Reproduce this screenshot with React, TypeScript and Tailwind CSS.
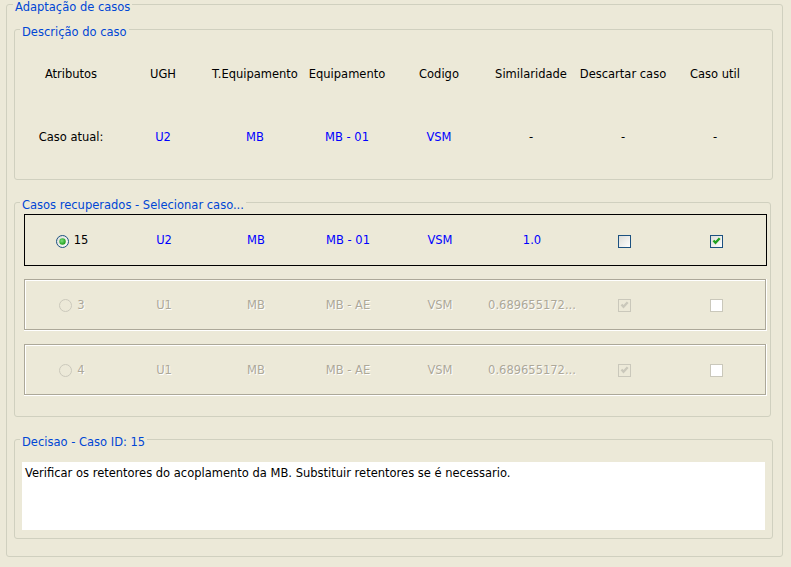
import React from "react";

type Caso = {
  id: string;
  ugh: string;
  tipo: string;
  equipamento: string;
  codigo: string;
  similaridade: string;
  descartar: boolean;
  util: boolean;
  ativo: boolean;
};

const casos: Caso[] = [
  { id: "15", ugh: "U2", tipo: "MB", equipamento: "MB - 01", codigo: "VSM", similaridade: "1.0", descartar: false, util: true, ativo: true },
  { id: "3", ugh: "U1", tipo: "MB", equipamento: "MB - AE", codigo: "VSM", similaridade: "0.689655172...", descartar: true, util: false, ativo: false },
  { id: "4", ugh: "U1", tipo: "MB", equipamento: "MB - AE", codigo: "VSM", similaridade: "0.689655172...", descartar: true, util: false, ativo: false },
];

const Legend = ({ children }: { children: React.ReactNode }) => (
  <legend className="ml-[-1px] px-[2px] pt-[6px] leading-[2px] text-[#0046D5]">{children}</legend>
);

const Radio = ({ selected, disabled, uid }: { selected: boolean; disabled: boolean; uid: string }) => {
  if (disabled) {
    return (
      <svg width="13" height="13" viewBox="0 0 13 13">
        <circle cx="6.5" cy="6.5" r="6" fill="none" stroke="#CAC8BB" />
      </svg>
    );
  }
  return (
    <svg width="13" height="13" viewBox="0 0 13 13">
      <defs>
        <linearGradient id={`rf-${uid}`} x1="0" y1="0" x2="1" y2="1">
          <stop offset="0" stopColor="#DCDCD7" />
          <stop offset="1" stopColor="#FFFFFF" />
        </linearGradient>
        <radialGradient id={`rd-${uid}`} cx="0.4" cy="0.4" r="0.6">
          <stop offset="0" stopColor="#7EE07E" />
          <stop offset="1" stopColor="#1E9E1E" />
        </radialGradient>
      </defs>
      <circle cx="6.5" cy="6.5" r="6" fill={`url(#rf-${uid})`} stroke="#1C5180" />
      {selected && <circle cx="6.5" cy="6.5" r="3.2" fill={`url(#rd-${uid})`} />}
    </svg>
  );
};

const Checkbox = ({ checked, disabled, uid }: { checked: boolean; disabled: boolean; uid: string }) => {
  const border = disabled ? "#CAC8BB" : "#1C5180";
  const fill = disabled ? (checked ? "#ECE9D8" : "#FFFFFF") : `url(#cf-${uid})`;
  const mark = disabled ? "#CAC8BB" : "#21A121";
  return (
    <svg width="13" height="13" viewBox="0 0 13 13">
      <defs>
        <linearGradient id={`cf-${uid}`} x1="0" y1="0" x2="1" y2="1">
          <stop offset="0" stopColor="#DCDCD7" />
          <stop offset="1" stopColor="#FFFFFF" />
        </linearGradient>
      </defs>
      <rect x="0.5" y="0.5" width="12" height="12" fill={fill} stroke={border} />
      {checked && <polyline points="3.5,5.5 5.5,7.8 9.7,3.3" fill="none" stroke={mark} strokeWidth="2.4" />}
    </svg>
  );
};

const CasoRow = ({ caso }: { caso: Caso }) => {
  const txt = caso.ativo ? "text-[#0000FF]" : "text-[#ACA899] [text-shadow:1px_1px_0_#fff]";
  const grid = (
    <div className="grid h-full grid-cols-[repeat(8,92px)] items-center pl-[1px] pt-[2px] text-center">
      <div className="flex items-center justify-center gap-[5px]">
        <Radio selected={caso.ativo} disabled={!caso.ativo} uid={`r${caso.id}`} />
        <span className={caso.ativo ? "text-black" : "text-[#ACA899] [text-shadow:1px_1px_0_#fff]"}>{caso.id}</span>
      </div>
      <span className={txt}>{caso.ugh}</span>
      <span className={txt}>{caso.tipo}</span>
      <span className={txt}>{caso.equipamento}</span>
      <span className={txt}>{caso.codigo}</span>
      <span className={txt}>{caso.similaridade}</span>
      <div className="flex justify-center">
        <Checkbox checked={caso.descartar} disabled={!caso.ativo} uid={`d${caso.id}`} />
      </div>
      <div className="flex justify-center">
        <Checkbox checked={caso.util} disabled={!caso.ativo} uid={`u${caso.id}`} />
      </div>
    </div>
  );

  if (caso.ativo) {
    return <div className="h-[52px] border border-black">{grid}</div>;
  }
  return (
    <div className="h-[52px] border-r border-b border-white">
      <div className="h-full border border-[#ACA899] shadow-[inset_1px_1px_0_#fff]">{grid}</div>
    </div>
  );
};

const App = () => {
  const headers = ["Atributos", "UGH", "T.Equipamento", "Equipamento", "Codigo", "Similaridade", "Descartar caso", "Caso util"];
  const atual = ["U2", "MB", "MB - 01", "VSM"];

  return (
    <div className="min-h-screen w-[791px] h-[567px] bg-[#ECE9D8] pl-[6px] pr-[8px] font-['DejaVu_Sans',sans-serif] text-[11.5px] text-black">
      <fieldset className="rounded-[3px] border border-[#D0D0BF] pl-[7px] pr-[9px] pt-[17px] pb-[17px]">
        <Legend>Adaptação de casos</Legend>

        {/* Descrição do caso */}
        <fieldset className="rounded-[3px] border border-[#D0D0BF] px-[6px] pt-[10px] pb-[10px]">
          <Legend>Descrição do caso</Legend>
          <div className="ml-[4px] grid grid-cols-[repeat(8,92px)] text-center">
            {headers.map((h) => (
              <div key={h} className="flex h-[63px] items-center justify-center">{h}</div>
            ))}
            <div className="flex h-[63px] items-center justify-center">Caso atual:</div>
            {atual.map((v) => (
              <div key={v} className="flex h-[63px] items-center justify-center text-[#0000FF]">{v}</div>
            ))}
            <div className="flex h-[63px] items-center justify-center">-</div>
            <div className="flex h-[63px] items-center justify-center">-</div>
            <div className="flex h-[63px] items-center justify-center">-</div>
          </div>
        </fieldset>

        {/* Casos recuperados */}
        <fieldset className="mt-[18px] mr-[2px] rounded-[3px] border border-[#D0D0BF] pl-[6px] pr-[3px] pt-[8px] pb-[20px]">
          <Legend>Casos recuperados - Selecionar caso...</Legend>
          <div className="flex flex-col gap-[13px] pl-[3px]">
            {casos.map((c) => (
              <CasoRow key={c.id} caso={c} />
            ))}
          </div>
        </fieldset>

        {/* Decisão */}
        <fieldset className="mt-[18px] rounded-[3px] border border-[#D0D0BF] px-[6px] pt-[19px] pb-[8px]">
          <Legend>Decisao - Caso ID: 15</Legend>
          <div className="mx-[1px] h-[68px] bg-white px-[3px] pt-[5px] leading-[13px]">
            Verificar os retentores do acoplamento da MB. Substituir retentores se é necessario.
          </div>
        </fieldset>
      </fieldset>
    </div>
  );
};

export default App;
